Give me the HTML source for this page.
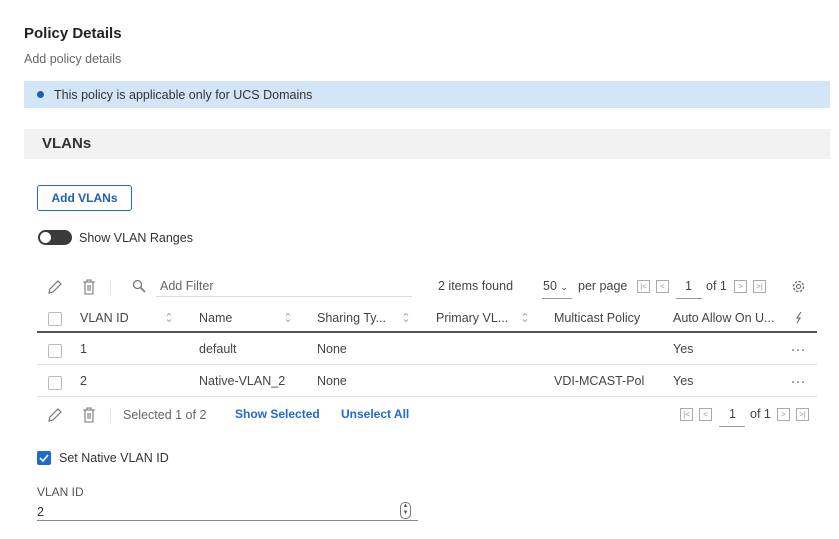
<!DOCTYPE html>
<html><head><style>
body{margin:0;width:839px;height:539px;background:#fff;font-family:"Liberation Sans",sans-serif;color:#333;position:relative;overflow:hidden}
.a{position:absolute;white-space:nowrap}
.cb{position:absolute;width:12px;height:12px;border:1px solid #bbb;border-radius:2px;background:#fff}
.t{font-size:12.5px;color:#444}
.pg{position:absolute;width:11px;height:11px;border:1px solid #aaa;font-size:8px;color:#999;text-align:center;line-height:11px}
.ln{position:absolute;height:1px;background:#ddd}
.dots{position:absolute;width:16px;height:3px}
.dots i{float:left;width:2px;height:2px;background:#888;border-radius:50%;margin-right:3px}
</style></head><body>
<div class="a" style="left:24px;top:25px;font-size:15px;font-weight:bold;color:#222">Policy Details</div>
<div class="a" style="left:24px;top:52px;font-size:12.5px;color:#666">Add policy details</div>
<div class="a" style="left:24px;top:81px;width:806px;height:27px;background:#d3e6f7"></div>
<div class="a" style="left:37px;top:91px;width:7px;height:7px;border-radius:50%;background:#1f5fb4"></div>
<div class="a" style="left:54px;top:88px;font-size:12.5px;color:#333">This policy is applicable only for UCS Domains</div>
<div class="a" style="left:24px;top:129px;width:806px;height:30px;background:#f2f2f2"></div>
<div class="a" style="left:42px;top:135px;font-size:15px;font-weight:bold;color:#333">VLANs</div>
<div class="a" style="left:37px;top:185px;width:93px;height:24px;border:1px solid #1f6ad1;border-radius:3px;color:#1f5fb4;font-size:12px;font-weight:bold;text-align:center;line-height:24px">Add VLANs</div>
<div class="a" style="left:38px;top:230px;width:34px;height:15px;border-radius:8px;background:#3a3a3a"></div>
<div class="a" style="left:40px;top:232px;width:11px;height:11px;border-radius:50%;background:#fff"></div>
<div class="a t" style="left:79px;top:231px;color:#333">Show VLAN Ranges</div>
<!-- toolbar -->
<svg class="a" style="left:47px;top:279px" width="16" height="16"><path d="M2 14 L3 10 L11 2 L14 5 L6 13 Z" fill="none" stroke="#777" stroke-width="1.2"/></svg>
<svg class="a" style="left:82px;top:279px" width="14" height="16"><path d="M1 3H13M5 3V1H9V3M3 3V15H11V3M6 6V12M8 6V12" fill="none" stroke="#777" stroke-width="1.1"/></svg>
<div class="a" style="left:110px;top:280px;width:1px;height:15px;background:#e4e4e4"></div>
<svg class="a" style="left:132px;top:279px" width="14" height="14"><circle cx="5.5" cy="5.5" r="4" fill="none" stroke="#777" stroke-width="1.3"/><path d="M8.5 8.5L13 13" stroke="#777" stroke-width="1.6"/></svg>
<div class="a t" style="left:160px;top:279px;color:#666">Add Filter</div>
<div class="ln" style="left:156px;top:296px;width:256px;background:#ddd"></div>
<div class="a t" style="left:438px;top:279px">2 items found</div>
<div class="a t" style="left:543px;top:279px">50 <span style="font-size:9px">&#8964;</span></div>
<div class="ln" style="left:542px;top:298px;width:30px;background:#999"></div>
<div class="a t" style="left:578px;top:279px">per page</div>
<div class="pg" style="left:637px;top:280px">|&lt;</div><div class="pg" style="left:656px;top:280px">&lt;</div>
<div class="a t" style="left:685px;top:279px">1</div>
<div class="ln" style="left:676px;top:298px;width:26px;background:#999"></div>
<div class="a t" style="left:706px;top:279px">of 1</div>
<div class="pg" style="left:734px;top:280px">&gt;</div><div class="pg" style="left:753px;top:280px">&gt;|</div>
<svg class="a" style="left:791px;top:279px" width="15" height="15"><circle cx="7.5" cy="7.5" r="5" fill="none" stroke="#666" stroke-width="1.3" stroke-dasharray="2.5 1.4"/><circle cx="7.5" cy="7.5" r="2" fill="none" stroke="#666"/></svg>
<!-- header -->
<div class="cb" style="left:48px;top:312px"></div>
<div class="a t" style="left:80px;top:311px">VLAN ID</div>
<div class="a t" style="left:199px;top:311px">Name</div>
<div class="a t" style="left:317px;top:311px">Sharing Ty...</div>
<div class="a t" style="left:436px;top:311px">Primary VL...</div>
<svg class="a" style="left:166px;top:312px" width="6" height="11"><path d="M1 3.5L3 1.5L5 3.5M1 7.5L3 9.5L5 7.5" fill="none" stroke="#aaa"/></svg>
<svg class="a" style="left:285px;top:312px" width="6" height="11"><path d="M1 3.5L3 1.5L5 3.5M1 7.5L3 9.5L5 7.5" fill="none" stroke="#aaa"/></svg>
<svg class="a" style="left:403px;top:312px" width="6" height="11"><path d="M1 3.5L3 1.5L5 3.5M1 7.5L3 9.5L5 7.5" fill="none" stroke="#aaa"/></svg>
<svg class="a" style="left:522px;top:312px" width="6" height="11"><path d="M1 3.5L3 1.5L5 3.5M1 7.5L3 9.5L5 7.5" fill="none" stroke="#aaa"/></svg>
<div class="a t" style="left:554px;top:311px">Multicast Policy</div>
<div class="a t" style="left:673px;top:311px">Auto Allow On U...</div>
<svg class="a" style="left:794px;top:311px" width="10" height="13"><path d="M7 1L3 7H6L3 12" fill="none" stroke="#666" stroke-width="1.1"/></svg>
<div class="a" style="left:37px;top:331px;width:780px;height:2px;background:#555"></div>
<div class="cb" style="left:48px;top:344px"></div>
<div class="a t" style="left:80px;top:342px">1</div><div class="a t" style="left:199px;top:342px">default</div><div class="a t" style="left:317px;top:342px">None</div><div class="a t" style="left:673px;top:342px">Yes</div>
<div class="dots" style="left:792px;top:349px"><i></i><i></i><i></i></div>
<div class="ln" style="left:37px;top:364px;width:780px"></div>
<div class="cb" style="left:48px;top:376px"></div>
<div class="a t" style="left:80px;top:374px">2</div><div class="a t" style="left:199px;top:374px">Native-VLAN_2</div><div class="a t" style="left:317px;top:374px">None</div><div class="a t" style="left:554px;top:374px">VDI-MCAST-Pol</div><div class="a t" style="left:673px;top:374px">Yes</div>
<div class="dots" style="left:792px;top:381px"><i></i><i></i><i></i></div>
<div class="ln" style="left:37px;top:396px;width:780px"></div>
<!-- footer -->
<svg class="a" style="left:47px;top:407px" width="16" height="16"><path d="M2 14 L3 10 L11 2 L14 5 L6 13 Z" fill="none" stroke="#777" stroke-width="1.2"/></svg>
<svg class="a" style="left:82px;top:407px" width="14" height="16"><path d="M1 3H13M5 3V1H9V3M3 3V15H11V3M6 6V12M8 6V12" fill="none" stroke="#777" stroke-width="1.1"/></svg>
<div class="a" style="left:110px;top:408px;width:1px;height:15px;background:#e4e4e4"></div>
<div class="a t" style="left:123px;top:408px;color:#666">Selected 1 of 2</div>
<div class="a" style="left:235px;top:407px;font-size:12px;font-weight:bold;color:#1f6ad1">Show Selected</div>
<div class="a" style="left:341px;top:407px;font-size:12px;font-weight:bold;color:#1f6ad1">Unselect All</div>
<div class="pg" style="left:680px;top:408px">|&lt;</div><div class="pg" style="left:699px;top:408px">&lt;</div>
<div class="a t" style="left:729px;top:407px">1</div>
<div class="ln" style="left:719px;top:426px;width:26px;background:#999"></div>
<div class="a t" style="left:750px;top:407px">of 1</div>
<div class="pg" style="left:777px;top:408px">&gt;</div><div class="pg" style="left:796px;top:408px">&gt;|</div>
<!-- native -->
<div class="a" style="left:37px;top:451px;width:14px;height:14px;background:#1f6ad1;border-radius:2px"></div>
<svg class="a" style="left:37px;top:451px" width="14" height="14"><path d="M3 7L6 10L11 4" fill="none" stroke="#fff" stroke-width="1.6"/></svg>
<div class="a t" style="left:59px;top:451px;color:#333">Set Native VLAN ID</div>
<div class="a" style="left:37px;top:485px;font-size:12px;color:#555">VLAN ID</div>
<div class="a t" style="left:37px;top:505px;color:#333">2</div>
<div class="a" style="left:400px;top:502px;width:9px;height:15px;border:1px solid #777;border-radius:5px;font-size:6px;line-height:7px;text-align:center;color:#555">&#9650;<br>&#9660;</div>
<div class="a" style="left:37px;top:520px;width:381px;height:1px;background:#888"></div>
</body></html>
